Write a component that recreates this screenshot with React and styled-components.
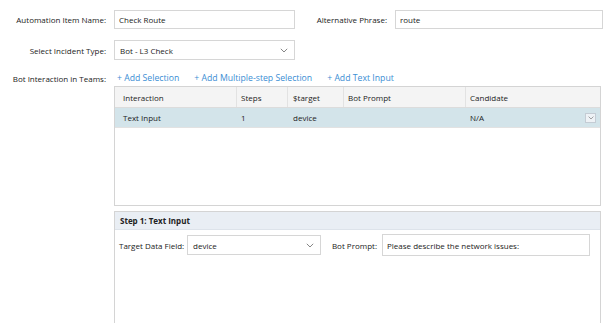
import React from "react";
import styled, { createGlobalStyle } from "styled-components";

const Global = createGlobalStyle`
  html, body { margin: 0; padding: 0; background: #fff; overflow: hidden; }
  body { font-family: "Open Sans", "Noto Sans", sans-serif; font-size: 8px; color: #222; }
  * { box-sizing: border-box; }
`;

const Page = styled.div`
  padding: 10px 0 0 0;
  width: 611px;
  height: 323px;
  overflow: hidden;
`;

const Row = styled.div`
  display: flex;
  align-items: center;
  height: ${(p) => p.h || 20}px;
  margin-bottom: ${(p) => p.mb || 0}px;
`;

const Label = styled.div`
  width: ${(p) => (p.w ? `${p.w}px` : "auto")};
  text-align: ${(p) => (p.left ? "left" : "right")};
  padding-right: ${(p) => (p.pr != null ? p.pr : 8)}px;
  white-space: nowrap;
  flex-shrink: 0;
`;

const TextBox = styled.div`
  width: ${(p) => p.w}px;
  height: ${(p) => p.h || 19}px;
  border: 1px solid #d6d6d6;
  background: #fff;
  display: flex;
  align-items: center;
  padding-left: 4px;
  flex-shrink: 0;
`;

const SelectBox = styled(TextBox)`
  justify-content: space-between;
  padding-right: 6px;
  padding-left: 5px;
`;

const Chevron = ({ size = 8 }) => (
  <svg width={size} height={size * 0.6} viewBox="0 0 10 6" fill="none">
    <path d="M1 1l4 4 4-4" stroke="#666" strokeWidth="1" />
  </svg>
);

const Links = styled.div`
  display: flex;
  gap: 15px;
  padding-left: 3px;
`;

const LinkText = styled.span`
  color: #3b8ed4;
  font-size: 8.7px;
`;

const Indented = styled.div`
  margin-left: 114px;
  width: 487px;
`;

const Table = styled.div`
  height: 120px;
  border: 1px solid #d4d4d4;
  background: #fff;
`;

const TRow = styled.div`
  display: grid;
  grid-template-columns: 121px 51px 56px 122px 1fr;
  height: ${(p) => (p.head ? 21 : 20)}px;
  background: ${(p) => (p.head ? "#f4f4f4" : p.sel ? "#d3e4ea" : "#fff")};
  border-bottom: 1px solid ${(p) => (p.head ? "#dcdcdc" : "#e2e2e2")};
`;

const Cell = styled.div`
  display: flex;
  align-items: center;
  padding-left: ${(p) => p.pl || 8}px;
  border-left: ${(p) => (p.first ? "none" : p.head ? "1px solid #e2e2e2" : "none")};
  justify-content: ${(p) => (p.between ? "space-between" : "flex-start")};
  padding-right: ${(p) => (p.between ? 4 : 0)}px;
`;

const MiniDrop = styled.div`
  width: 11px;
  height: 10px;
  border: 1px solid #c4ccd4;
  background: #eef2f6;
  display: flex;
  align-items: center;
  justify-content: center;
`;

const Panel = styled.div`
  margin-top: 5px;
  height: 130px;
  border: 1px solid #d4d4d4;
  background: #fff;
`;

const PanelHead = styled.div`
  height: 18px;
  background: #e9eef4;
  border-bottom: 1px solid #dde3ea;
  display: flex;
  align-items: center;
  padding-left: 5px;
  font-weight: 700;
`;

const PanelBody = styled.div`
  display: flex;
  align-items: center;
  padding: 4px 0 0 4px;
`;

export default function App() {
  return (
    <>
      <Global />
      <Page>
        <Row h={19} mb={11}>
          <Label w={114}>Automation Item Name:</Label>
          <TextBox w={181}>Check Route</TextBox>
          <Label w={100}>Alternative Phrase:</Label>
          <TextBox w={208}>route</TextBox>
        </Row>
        <Row h={20} mb={10}>
          <Label w={114}>Select Incident Type:</Label>
          <SelectBox w={181} h={20}>
            <span>Bot - L3 Check</span>
            <Chevron />
          </SelectBox>
        </Row>
        <Row h={16}>
          <Label w={114}>Bot Interaction in Teams:</Label>
          <Links>
            <LinkText>+ Add Selection</LinkText>
            <LinkText>+ Add Multiple-step Selection</LinkText>
            <LinkText>+ Add Text Input</LinkText>
          </Links>
        </Row>
        <Indented>
          <Table>
            <TRow head>
              <Cell head first>Interaction</Cell>
              <Cell head pl={4}>Steps</Cell>
              <Cell head pl={5}>$target</Cell>
              <Cell head pl={4}>Bot Prompt</Cell>
              <Cell head pl={4}>Candidate</Cell>
            </TRow>
            <TRow sel>
              <Cell first>Text Input</Cell>
              <Cell pl={5}>1</Cell>
              <Cell pl={6}>device</Cell>
              <Cell />
              <Cell pl={5} between>
                <span>N/A</span>
                <MiniDrop>
                  <Chevron size={6} />
                </MiniDrop>
              </Cell>
            </TRow>
          </Table>
          <Panel>
            <PanelHead>Step 1: Text Input</PanelHead>
            <PanelBody>
              <Label left w={68} pr={0}>Target Data Field:</Label>
              <SelectBox w={134} h={20}>
                <span>device</span>
                <Chevron />
              </SelectBox>
              <Label w={61} pr={5}>Bot Prompt:</Label>
              <TextBox w={208} h={22}>Please describe the network issues:</TextBox>
            </PanelBody>
          </Panel>
        </Indented>
      </Page>
    </>
  );
}
